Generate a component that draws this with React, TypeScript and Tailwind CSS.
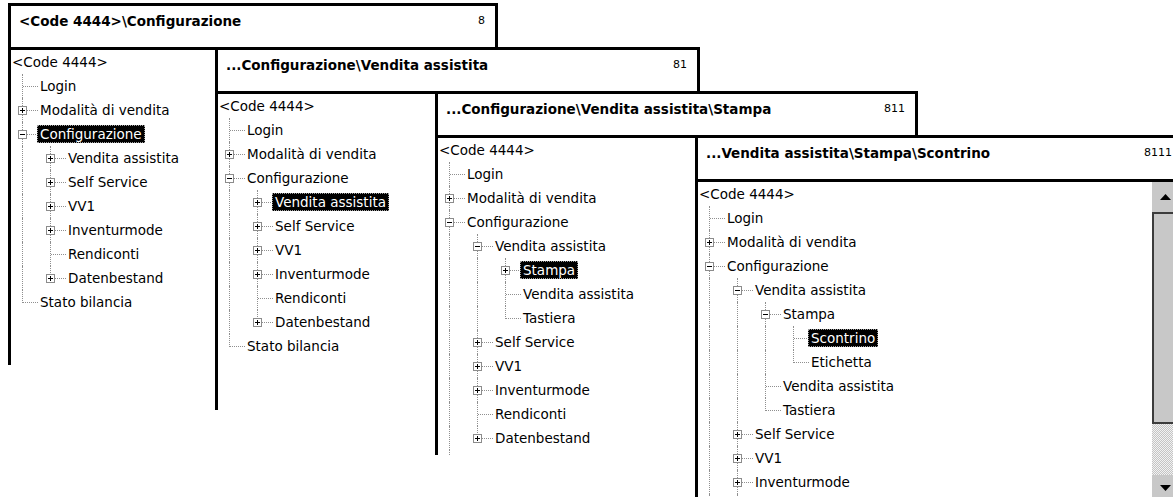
import React from "react";

type TNode = { label: string; kids?: TNode[]; open?: boolean; sel?: boolean; plus?: boolean };
type Row = { label: string; depth: number; last: boolean; cont: boolean[]; box: null | "+" | "-"; sel: boolean };

function buildTree(stage: number): TNode {
  const stampa: TNode = {
    label: "Stampa",
    plus: true,
    open: stage >= 4,
    sel: stage === 3,
    kids: [{ label: "Scontrino", sel: stage === 4 }, { label: "Etichetta" }],
  };
  const vendita: TNode = {
    label: "Vendita assistita",
    plus: true,
    open: stage >= 3,
    sel: stage === 2,
    kids: [stampa, { label: "Vendita assistita" }, { label: "Tastiera" }],
  };
  const conf: TNode = {
    label: "Configurazione",
    plus: true,
    open: true,
    sel: stage === 1,
    kids: [
      vendita,
      { label: "Self Service", plus: true },
      { label: "VV1", plus: true },
      { label: "Inventurmode", plus: true },
      { label: "Rendiconti" },
      { label: "Datenbestand", plus: true },
    ],
  };
  return {
    label: "<Code 4444>",
    open: true,
    kids: [{ label: "Login" }, { label: "Modalità di vendita", plus: true }, conf, { label: "Stato bilancia" }],
  };
}

function flatten(n: TNode, depth: number, last: boolean, cont: boolean[], out: Row[]) {
  out.push({ label: n.label, depth, last, cont, box: n.plus ? (n.open ? "-" : "+") : null, sel: !!n.sel });
  if (n.open && n.kids) {
    const childCont = depth >= 1 ? [...cont, !last] : [];
    const len = n.kids.length;
    n.kids.forEach((k, i) => flatten(k, depth + 1, i === len - 1, childCont, out));
  }
}

function ExpandBox({ kind }: { kind: "+" | "-" }) {
  return (
    <div className="absolute left-[7px] top-[8px] h-[9px] w-[9px] border border-[#8c8c8c] bg-white">
      <div className="absolute left-[1px] top-[3px] h-px w-[5px] bg-black" />
      {kind === "+" && <div className="absolute left-[3px] top-[1px] h-[5px] w-px bg-black" />}
    </div>
  );
}

function TreeRow({ row }: { row: Row }) {
  return (
    <div className="flex h-[24px] items-center">
      {row.cont.map((c, i) => (
        <div key={i} className="relative h-full w-[28px] shrink-0">
          {c && <div className="absolute left-[11px] top-0 h-full border-l border-dotted border-[#8f8f8f]" />}
        </div>
      ))}
      {row.depth > 0 && (
        <div className="relative h-full w-[28px] shrink-0">
          <div
            className={
              row.last
                ? "absolute left-[11px] top-0 h-[13px] border-l border-dotted border-[#8f8f8f]"
                : "absolute left-[11px] top-0 h-full border-l border-dotted border-[#8f8f8f]"
            }
          />
          <div className="absolute left-[12px] top-[12px] w-[15px] border-t border-dotted border-[#8f8f8f]" />
          {row.box && <ExpandBox kind={row.box} />}
        </div>
      )}
      <span
        className={
          (row.depth === 0 ? "px-[1px] " : "-ml-[2px] px-[3px] ") +
          (row.sel
            ? "bg-black text-white outline-1 outline-dotted outline-[#a0a0a0] -outline-offset-1 "
            : "text-black ") +
          "h-[18px] whitespace-nowrap text-[13.5px] leading-[18px]"
        }
      >
        {row.label}
      </span>
    </div>
  );
}

function ScrollBar() {
  return (
    <div className="flex w-[33px] shrink-0 flex-col">
      <div className="flex h-[30px] shrink-0 items-center bg-[#c8c8c8]">
        <div className="flex w-[27px] justify-center">
          <svg width="11" height="6" viewBox="0 0 11 6">
            <polygon points="0,6 11,6 5.5,0" fill="#000" />
          </svg>
        </div>
      </div>
      <div className="h-[212px] shrink-0 border-y-2 border-l-2 border-[#3c3c3c] bg-[#c8c8c8]" />
      <div className="h-[51px] shrink-0 bg-[repeating-conic-gradient(#c4c4c4_0_25%,#f2f2f2_0_50%)] bg-[length:2px_2px]" />
      <div className="flex h-[26px] shrink-0 items-center bg-[#c8c8c8]">
        <div className="flex w-[27px] justify-center">
          <svg width="11" height="6" viewBox="0 0 11 6">
            <polygon points="0,0 11,0 5.5,6" fill="#000" />
          </svg>
        </div>
      </div>
    </div>
  );
}

type Win = { title: string; num: string; stage: number; pos: string; panelH: string; scroll?: boolean };

const wins: Win[] = [
  { title: "<Code 4444>\\Configurazione", num: "8", stage: 1, pos: "left-[8px] top-[3px] w-[490px]", panelH: "h-[315px]" },
  { title: "...Configurazione\\Vendita assistita", num: "81", stage: 2, pos: "left-[215px] top-[47px] w-[485px]", panelH: "h-[316px]" },
  { title: "...Configurazione\\Vendita assistita\\Stampa", num: "811", stage: 3, pos: "left-[435px] top-[91px] w-[483px]", panelH: "h-[317px]" },
  { title: "...Vendita assistita\\Stampa\\Scontrino", num: "8111", stage: 4, pos: "left-[695px] top-[135px] w-[490px]", panelH: "h-[330px]", scroll: true },
];

function Window({ w }: { w: Win }) {
  const rows: Row[] = [];
  flatten(buildTree(w.stage), 0, true, [], rows);
  return (
    <div className={"absolute bg-white " + w.pos}>
      <div className="flex h-[47px] items-start justify-between border-[3px] border-black pl-[8px] pr-[10px] pt-[6px]">
        <span className="whitespace-nowrap text-[13.5px] font-bold leading-[18px] text-black">{w.title}</span>
        <span className="text-[11px] leading-[18px] text-black">{w.num}</span>
      </div>
      <div className={"flex overflow-hidden border-l-[3px] border-black " + w.panelH}>
        <div className="min-w-0 flex-1">
          {rows.map((r, i) => (
            <TreeRow key={i} row={r} />
          ))}
        </div>
        {w.scroll && <ScrollBar />}
      </div>
    </div>
  );
}

export default function App() {
  return (
    <div className="relative h-[497px] w-[1173px] overflow-hidden bg-white font-['DejaVu_Sans',sans-serif]">
      {wins.map((w, i) => (
        <Window key={i} w={w} />
      ))}
    </div>
  );
}
